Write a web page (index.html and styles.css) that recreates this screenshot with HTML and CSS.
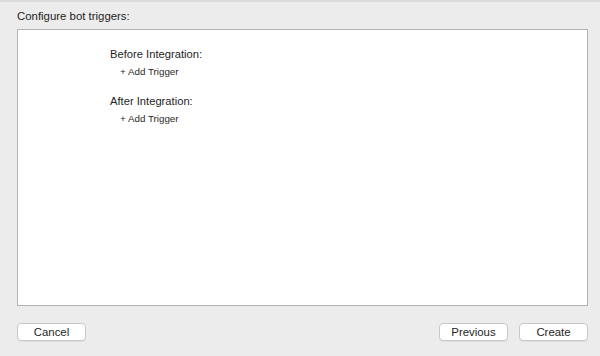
FILE: index.html
```html
<!DOCTYPE html>
<html lang="en">
<head>
  <meta charset="UTF-8">
  <title>Configure bot triggers</title>
  <link rel="stylesheet" href="styles.css">
</head>
<body>
  <div class="sheet">
    <p class="title">Configure bot triggers:</p>

    <div class="panel">
      <div class="group">
        <h3>Before Integration:</h3>
        <a class="add" href="#">+ Add Trigger</a>
      </div>
      <div class="group">
        <h3>After Integration:</h3>
        <a class="add" href="#">+ Add Trigger</a>
      </div>
    </div>

    <div class="actions">
      <button type="button" class="btn">Cancel</button>
      <div class="right">
        <button type="button" class="btn">Previous</button>
        <button type="button" class="btn">Create</button>
      </div>
    </div>
  </div>
</body>
</html>
```

FILE: styles.css
```css
body {
  margin: 0;
  font-family: "Liberation Sans", Arial, sans-serif;
  color: #1e1e1e;
  background: #ececec;
}

.sheet {
  height: 356px;
  box-sizing: border-box;
  padding: 8px 12px 0 17px;
  border-top: 2px solid #dcdcdc;
}

.title {
  margin: 0 0 7px;
  font-size: 11.4px;
  line-height: 12px;
}

.panel {
  width: 571px;
  height: 277px;
  box-sizing: border-box;
  border: 1px solid #b3b3b3;
  background: #fff;
  padding: 17px 0 0 92px;
}

.group {
  margin-bottom: 16px;
}

.group h3 {
  margin: 0 0 5px;
  font-size: 11.2px;
  font-weight: normal;
  line-height: 14px;
}

.add {
  display: block;
  margin-left: 10px;
  font-size: 9.8px;
  line-height: 12px;
  color: #2a2a2a;
  text-decoration: none;
}

.actions {
  display: flex;
  justify-content: space-between;
  width: 571px;
  margin-top: 17px;
}

.right {
  display: flex;
  gap: 11px;
}

.btn {
  width: 69px;
  height: 18px;
  padding: 0;
  font-family: inherit;
  font-size: 11.4px;
  color: #1e1e1e;
  background: #fff;
  border: 1px solid #c8c8c8;
  border-radius: 4px;
  box-shadow: 0 1px 0 rgba(0, 0, 0, 0.05);
}
```
